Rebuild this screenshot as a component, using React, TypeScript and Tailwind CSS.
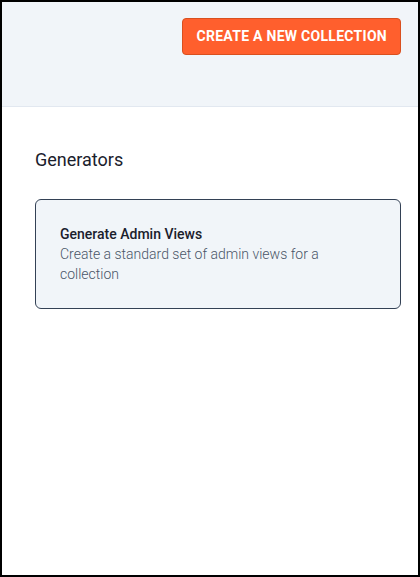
import React from "react";

export default function App() {
  return (
    <div
      className="w-[420px] h-[577px] border-2 border-black bg-white flex flex-col overflow-hidden"
      style={{ fontFamily: "Roboto, 'Liberation Sans', sans-serif" }}
    >
      <div className="h-[105px] bg-[#f1f5f9] border-b border-[#e2e8f0] flex justify-end items-start pt-4 pr-[17px] shrink-0">
        <button className="h-[37px] px-[13px] rounded-[4px] bg-[#ff5f2d] border border-[#d9501f] text-white font-bold text-[14px] tracking-[0.02em] uppercase">
          Create a new collection
        </button>
      </div>
      <div className="pl-[33px] pr-[17px] pt-[39px]">
        <h2 className="text-[18px] leading-[28px] text-[#1a202c] font-normal">Generators</h2>
        <div className="mt-[25px] rounded-[6px] border border-[#334155] bg-[#f1f5f9] p-6">
          <div className="text-[14px] leading-5 font-medium text-[#1a202c]">Generate Admin Views</div>
          <div className="text-[14px] leading-5 font-light text-[#4a5568] w-[280px]">
            Create a standard set of admin views for a collection
          </div>
        </div>
      </div>
    </div>
  );
}
